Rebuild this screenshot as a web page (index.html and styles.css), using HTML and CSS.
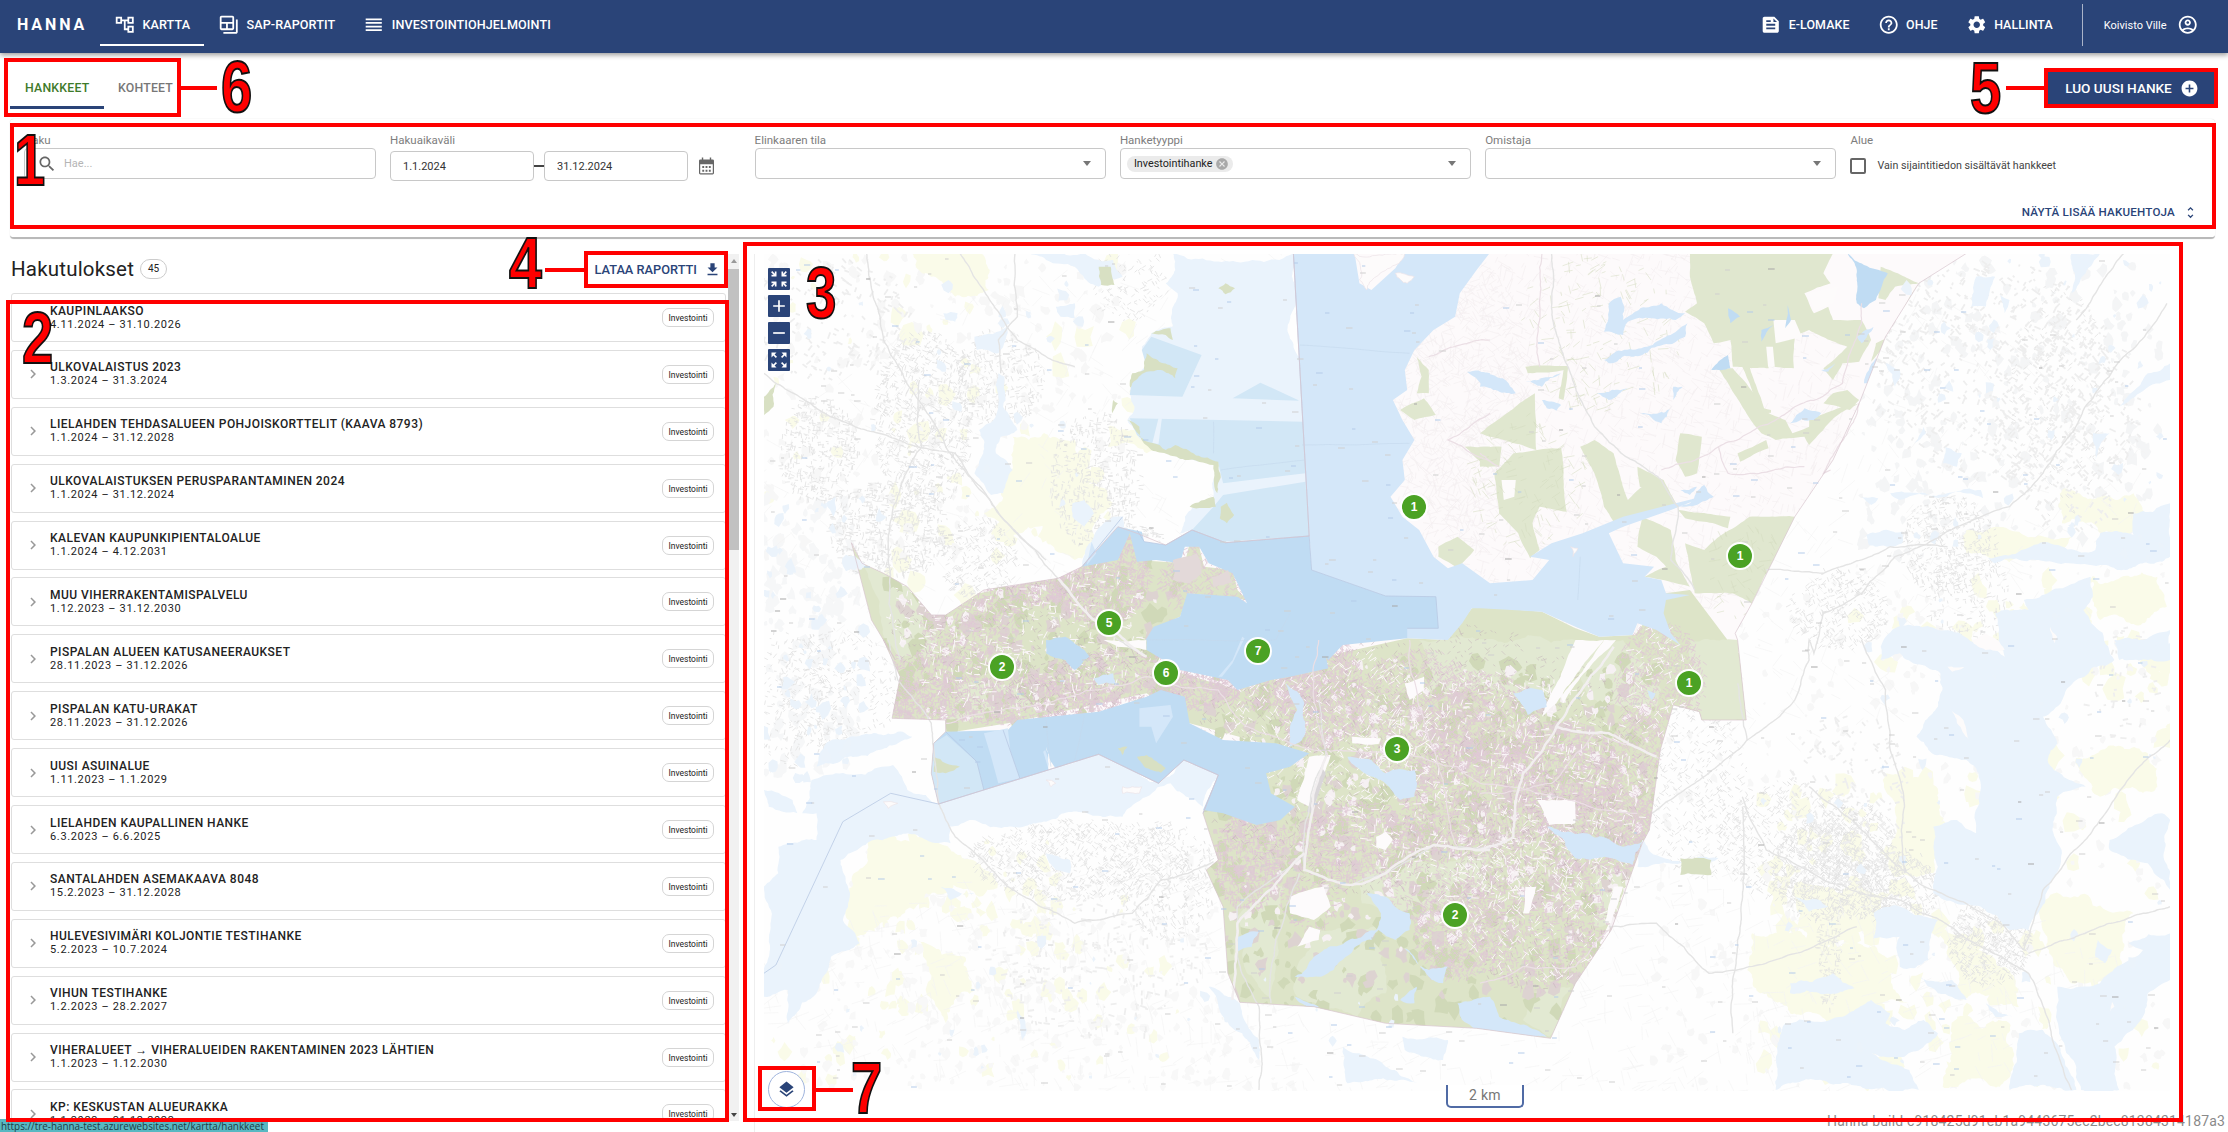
FILE: index.html
```
<!DOCTYPE html>
<html lang="fi">
<head>
<meta charset="utf-8">
<title>Hanna</title>
<link rel="stylesheet" href="styles.css">
</head>
<body>
<header class="topbar">
  <div class="brand">HANNA</div>
  <nav class="nav">
    <a class="nav-item active"><svg class="ico" viewBox="0 0 24 24"><path d="M22 11V3h-7v3H9V3H2v8h7V8h2v10h4v3h7v-8h-7v3h-2V8h2v3h7zM7 9H4V5h3v4zm10 6h3v4h-3v-4zm0-10h3v4h-3V5z"/></svg><span>KARTTA</span></a>
    <a class="nav-item"><svg class="ico" viewBox="0 0 24 24"><path d="M20 6v14H6v2h14c1.1 0 2-.9 2-2V6h-2zM16 2H4c-1.1 0-2 .9-2 2v12c0 1.1.9 2 2 2h12c1.1 0 2-.9 2-2V4c0-1.1-.9-2-2-2zM9 16H4v-5h5v5zm7 0h-5v-5h5v5zm0-7H4V4h12v5z"/></svg><span>SAP-RAPORTIT</span></a>
    <a class="nav-item"><svg class="ico" viewBox="0 0 24 24"><path d="M3 15h18v-2H3v2zm0 4h18v-2H3v2zm0-8h18V9H3v2zm0-6v2h18V5H3z"/></svg><span>INVESTOINTIOHJELMOINTI</span></a>
  </nav>
  <div class="nav-right">
    <a class="nav-item"><svg class="ico" viewBox="0 0 24 24"><path d="M16 3H5c-1.1 0-2 .9-2 2v14c0 1.1.9 2 2 2h14c1.1 0 2-.9 2-2V8l-5-5zM7 7h5v2H7V7zm10 10H7v-2h10v2zm0-4H7v-2h10v2zm-2-4V5l4 4h-4z"/></svg><span>E-LOMAKE</span></a>
    <a class="nav-item"><svg class="ico" viewBox="0 0 24 24"><path d="M11 18h2v-2h-2v2zm1-16C6.48 2 2 6.48 2 12s4.48 10 10 10 10-4.480 10-10S17.520 2 12 2zm0 18c-4.410 0-8-3.590-8-8s3.590-8 8-8 8 3.590 8 8-3.590 8-8 8zm0-14c-2.210 0-4 1.790-4 4h2c0-1.100.9-2 2-2s2 .9 2 2c0 2-3 1.750-3 5h2c0-2.250 3-2.500 3-5 0-2.210-1.790-4-4-4z"/></svg><span>OHJE</span></a>
    <a class="nav-item"><svg class="ico" viewBox="0 0 24 24"><path d="M19.140 12.940c.04-.3.060-.610.060-.940 0-.320-.020-.640-.070-.940l2.030-1.580c.180-.140.230-.410.120-.610l-1.920-3.320c-.120-.220-.370-.290-.590-.220l-2.390.960c-.500-.380-1.030-.700-1.620-.940l-.360-2.540c-.040-.240-.240-.410-.480-.410h-3.840c-.240 0-.430.170-.470.410l-.360 2.540c-.590.240-1.130.570-1.620.940l-2.390-.960c-.220-.080-.470 0-.590.220L2.740 8.870c-.120.210-.080.470.120.610l2.030 1.580c-.050.300-.090.630-.090.940s.020.640.070.940l-2.030 1.580c-.180.140-.230.410-.120.610l1.920 3.320c.120.220.370.290.590.220l2.390-.960c.500.380 1.030.700 1.620.940l.360 2.540c.050.240.240.410.480.410h3.840c.240 0 .440-.170.470-.410l.360-2.540c.590-.240 1.130-.560 1.620-.940l2.390.960c.220.080.470 0 .590-.220l1.920-3.320c.120-.220.070-.470-.120-.610l-2.010-1.580zM12 15.600c-1.980 0-3.600-1.620-3.600-3.600s1.620-3.600 3.600-3.600 3.600 1.620 3.600 3.600-1.620 3.600-3.600 3.600z"/></svg><span>HALLINTA</span></a>
    <div class="user"><span>Koivisto Ville</span><svg class="ico" viewBox="0 0 24 24"><path d="M12 2C6.480 2 2 6.480 2 12s4.480 10 10 10 10-4.480 10-10S17.520 2 12 2zM7.350 18.500C8.660 17.560 10.260 17 12 17s3.340.560 4.650 1.500c-1.310.940-2.910 1.500-4.650 1.500s-3.340-.560-4.650-1.500zm10.790-1.380C16.450 15.800 14.320 15 12 15s-4.450.800-6.140 2.120C4.700 15.730 4 13.950 4 12c0-4.420 3.580-8 8-8s8 3.580 8 8c0 1.950-.7 3.730-1.860 5.120zM12 6c-1.930 0-3.500 1.570-3.500 3.500S10.070 13 12 13s3.500-1.570 3.500-3.500S13.930 6 12 6zm0 5c-.83 0-1.500-.67-1.500-1.500S11.170 8 12 8s1.500.67 1.500 1.500S12.830 11 12 11z"/></svg></div>
  </div>
</header>

<div class="tabs">
  <div class="tab selected">HANKKEET</div>
  <div class="tab">KOHTEET</div>
  <button class="create">LUO UUSI HANKE<svg viewBox="0 0 24 24"><path d="M12 2C6.480 2 2 6.480 2 12s4.480 10 10 10 10-4.480 10-10S17.520 2 12 2zm5 11h-4v4h-2v-4H7v-2h4V7h2v4h4v2z"/></svg></button>
</div>

<section class="filters">
  <div class="fields">
    <div class="field"><label>Haku</label><div class="input search"><svg viewBox="0 0 24 24"><path d="M15.500 14h-.79l-.28-.27C15.410 12.590 16 11.110 16 9.500 16 5.910 13.090 3 9.500 3S3 5.910 3 9.500 5.910 16 9.500 16c1.610 0 3.090-.59 4.230-1.570l.27.28v.79l5 4.990L20.490 19l-4.990-5zm-6 0C7.010 14 5 11.990 5 9.500S7.010 5 9.500 5 14 7.010 14 9.500 11.990 14 9.500 14z"/></svg><span>Hae...</span></div></div>
    <div class="field"><label>Hakuaikaväli</label><div class="dates"><div class="input date">1.1.2024</div><i class="dash"></i><div class="input date">31.12.2024</div><svg class="cal" viewBox="0 0 16 18"><path d="M3 0h1.500v2h7V0H13v2h1.500q1.500 0 1.500 1.500v13q0 1.500-1.500 1.500h-13Q0 18 0 16.500v-13Q0 2 1.500 2H3zM1.300 7v9.700h13.400V7zM3.500 9h2v2h-2zm3.500 0h2v2H7zm3.500 0h2v2h-2zm-7 4h2v2h-2zM7 13h2v2H7zm3.500 0h2v2h-2z" fill-rule="evenodd"/></svg></div></div>
    <div class="field"><label>Elinkaaren tila</label><div class="input select"></div></div>
    <div class="field"><label>Hanketyyppi</label><div class="input select"><span class="chip">Investointihanke<svg viewBox="0 0 24 24"><path d="M12 2C6.470 2 2 6.470 2 12s4.470 10 10 10 10-4.470 10-10S17.530 2 12 2zm5 13.590L15.590 17 12 13.410 8.410 17 7 15.590 10.590 12 7 8.410 8.410 7 12 10.590 15.590 7 17 8.410 13.410 12 17 15.590z"/></svg></span></div></div>
    <div class="field"><label>Omistaja</label><div class="input select"></div></div>
    <div class="field"><label>Alue</label><div class="check"><i></i><span>Vain sijaintitiedon sisältävät hankkeet</span></div></div>
  </div>
  <div class="more">NÄYTÄ LISÄÄ HAKUEHTOJA<svg viewBox="0 0 24 24"><path d="M12 5.830L15.170 9l1.410-1.410L12 3 7.410 7.590 8.830 9 12 5.830zm0 12.340L8.830 15l-1.410 1.410L12 21l4.590-4.590L15.170 15 12 18.170z"/></svg></div>
</section>

<main class="main">
  <section class="results">
    <div class="results-inner">
      <div class="results-head"><h1>Hakutulokset</h1><span class="count">45</span><div class="download">LATAA RAPORTTI<svg viewBox="0 0 24 24"><path d="M19 9h-4V3H9v6H5l7 7 7-7zM5 18v2h14v-2H5z"/></svg></div></div>
      <div class="list" id="list"></div>
    </div>
    <div class="scrollbar"><i class="up"></i><i class="thumb"></i><i class="down"></i></div>
  </section>
  <section class="mapcard">
    <div class="map">
      <svg id="map" width="1406" height="837" viewBox="764 254 1406 837"></svg>
      <div class="controls">
        <button><svg viewBox="0 0 24 24"><path d="M9 9V3H7v2.590L3.910 2.500 2.500 3.910 5.590 7H3v2h6zm12 0V7h-2.590l3.090-3.090-1.410-1.410L17 5.590V3h-2v6h6zM3 15v2h2.590L2.500 20.090l1.410 1.410L7 18.410V21h2v-6H3zm12 0v6h2v-2.590l3.090 3.090 1.410-1.410L18.410 17H21v-2h-6z"/></svg></button>
        <button><svg viewBox="0 0 24 24"><path d="M19 13h-6v6h-2v-6H5v-2h6V5h2v6h6z"/></svg></button>
        <button><svg viewBox="0 0 24 24"><path d="M19 13H5v-2h14z"/></svg></button>
        <button><svg viewBox="0 0 24 24"><path d="M15 3l2.300 2.300-2.890 2.870 1.420 1.420L18.700 6.700 21 9V3zM3 9l2.300-2.300 2.870 2.890 1.420-1.420L6.700 5.300 9 3H3zm6 12l-2.300-2.300 2.890-2.870-1.420-1.420L5.300 17.300 3 15v6zm12-6l-2.300 2.300-2.870-2.890-1.420 1.420 2.890 2.870L15 21h6z"/></svg></button>
      </div>
      <div id="markers"></div>
      <div class="layers"><svg viewBox="0 0 24 24"><path d="M11.990 18.540l-7.370-5.730L3 14.070l9 7 9-7-1.630-1.270-7.380 5.740zM12 16l7.360-5.730L21 9l-9-7-9 7 1.630 1.270L12 16z"/></svg></div>
      <div class="scale">2 km</div>
    </div>
  </section>
</main>
<div class="build">Hanna build c918425d91eb1a9443675ec2bec81384314187a3</div>
<div class="status">https://tre-hanna-test.azurewebsites.net/kartta/hankkeet</div>

<div class="frame f1"></div><div class="frame f2"></div><div class="frame f3"></div><div class="frame f4"></div><div class="frame f5"></div><div class="frame f6"></div><div class="frame f7"></div>
<i class="lead l4"></i><i class="lead l5"></i><i class="lead l6"></i><i class="lead l7"></i>
<svg class="numbers" width="2228" height="1132">
  <g transform="translate(14 185) scale(.78 1)"><text>1</text></g>
  <g transform="translate(22 363) scale(.78 1)"><text>2</text></g>
  <g transform="translate(806 318) scale(.76 1)"><text>3</text></g>
  <g transform="translate(509 288) scale(.82 1)"><text>4</text></g>
  <g transform="translate(1970 113) scale(.78 1)"><text>5</text></g>
  <g transform="translate(221 112) scale(.78 1)"><text>6</text></g>
  <g transform="translate(851 1113) scale(.78 1)"><text>7</text></g>
</svg>
<script src="map.js"></script>
</body>
</html>
```
FILE: styles.css
```
*{box-sizing:border-box}
body{margin:0;width:2228px;height:1132px;overflow:hidden;position:relative;background:#fff;font-family:Roboto,"Liberation Sans",sans-serif;font-size:12px;color:#222;display:flex;flex-direction:column}
svg{fill:currentColor;flex:none}
button{border:0;padding:0;margin:0;font:inherit}
.topbar{height:53px;flex:none;background:#2a4478;color:#fff;display:flex;align-items:flex-start;box-shadow:0 2px 5px rgba(0,0,0,.4);z-index:1;padding-left:17px}
.brand{font-weight:700;font-size:16px;letter-spacing:2.9px;width:83px;line-height:50px}
.nav,.nav-right{display:flex;height:46px;align-items:stretch}
.nav-right{margin-left:auto}
.nav-item{display:flex;align-items:center;padding:4px 14px 0;font-size:12.600px;font-weight:500;letter-spacing:.1px;white-space:nowrap}
.nav-item.active{border-bottom:2px solid #fff;padding-top:6px;width:104px}
.nav-item span{margin-top:-1px}
.ico{width:21.500px;height:21.500px;margin-right:7px}
.nav-right .nav-item{font-size:12.400px}
.user{display:flex;align-items:center;border-left:1px solid #aab4c9;margin:4px 30px 0 15px;padding-left:21px;font-size:11px}
.user span{margin-right:10px}
.user .ico{margin:0}
.tabs{height:66px;flex:none;display:flex;padding:21px 12px 0 10px}
.tab{height:35px;line-height:28px;padding:0 14px;font-size:12.300px;font-weight:500;color:#777;letter-spacing:.2px}
.tab.selected{width:94px;padding-left:15px;color:#3e7a2a;border-bottom:3px solid #2a4478}
.create{margin:-3px 0 0 auto;width:170px;height:36px;background:#2a4478;color:#fff;font-size:13.600px;font-weight:500;display:flex;align-items:center;justify-content:center;gap:8px;padding:0 0 2px 2px;white-space:nowrap}
.create svg{width:19px;height:19px}
.filters{height:120px;flex:none;margin:0 13px 0 10px;border-bottom:2px solid #b9b9b9;border-radius:4px;padding:14px 14px 0;box-shadow:0 0 1px #ccc}
.fields{display:grid;grid-template-columns:352px 350.600px repeat(4,351.300px);gap:14px;height:64px}
.field label{display:block;height:15px;line-height:14px;color:#7d7d7d;font-size:11.500px}
.input{height:31px;border:1px solid #c8c8c8;border-radius:4px;display:flex;align-items:center}
.search{padding-left:12px;color:#666}
.search svg{width:20px;height:20px;margin-right:7px}
.search span{color:#b5b5b5;font-size:11px}
.dates{display:flex;align-items:center;padding-top:3px}
.date{width:144px;height:30px;padding-left:12px;color:#333;font-size:11px}
.dash{width:10px;height:1.500px;background:#444}
.cal{width:15px;height:18px;margin-left:11px;color:#666}
.select{padding:0 14px 0 6px}
.select:after{content:"";margin-left:auto;border:4px solid transparent;border-top:5px solid #777;border-bottom:0}
.chip{background:#ebebeb;border-radius:8px;height:16px;display:flex;align-items:center;padding:0 4px 0 7px;gap:3px;font-size:10.800px}
.chip svg{width:14px;height:14px;color:#a9a9a9}
.check{display:flex;align-items:center;gap:11px;height:35px;color:#444;font-size:10.700px}
.check i{width:16px;height:16px;border:2px solid #666;border-radius:2px}
.more{display:flex;justify-content:flex-end;align-items:center;height:28px;margin:1px 3px 0 0;color:#2a4478;font-weight:500;font-size:11.600px;letter-spacing:.2px;gap:8px}
.more svg{width:15px;height:15px}
.main{display:flex;flex:1;min-height:0}
.results{width:739px;display:flex;padding-top:15px;height:880px}
.results-inner{width:728px;overflow:hidden;padding-left:11px}
.results-head{display:flex;align-items:center;height:30px}
h1{font-size:20.500px;font-weight:400;margin:0 6px 0 0;letter-spacing:.2px}
.count{border:1px solid #ccc;border-radius:10px;height:20px;width:27px;text-align:center;line-height:18px;font-size:10px}
.download{margin-left:auto;padding-right:7px;color:#2a4478;font-weight:500;font-size:12.800px;display:flex;align-items:center;gap:7px}
.download svg{width:17px;height:17px}
.list{padding-top:9px;width:715px}
.row{height:49px;margin-bottom:7.900px;border:1px solid #dedede;border-radius:3px;display:flex;align-items:center;padding:0 11px 0 12px}
.row>svg{width:18px;height:18px;color:#999;margin-right:8px}
.row div{margin-top:-1px}
.row b{display:block;font-weight:500;font-size:12px;letter-spacing:.46px;line-height:15px;white-space:nowrap}
.row span{display:block;font-size:11px;letter-spacing:.65px;line-height:12px}
.row em{font-style:normal;margin-left:auto;border:1px solid #d5d5d5;border-radius:7px;width:52px;height:19px;text-align:center;line-height:18px;font-size:8.500px}
.scrollbar{width:11px;background:#f1f1f1;display:flex;flex-direction:column;align-items:center;height:867px}
.thumb{width:11px;height:281px;background:#c1c1c1;margin-top:6px}
.up,.down{border:3px solid transparent}
.up{border-top:0;border-bottom:4px solid #999;margin-top:5px}
.down{border-bottom:0;border-top:4px solid #444;margin-top:auto;margin-bottom:4px}
.mapcard{margin:15px 0 0 15px;border-left:1px solid #eee;padding-left:9px;width:1430px}
.map{position:relative;width:1406px;height:837px}
#map{display:block}
.controls{position:absolute;left:4px;top:14px;display:grid;gap:5px}
.controls button{width:22px;height:22px;background:#2a4478;color:#fff;border-radius:1px;display:grid;place-items:center}
.controls svg{width:20px;height:20px}
.marker{position:absolute;width:28px;height:28px;border-radius:50%;background:#4ba224;border:2px solid #fff;color:#fff;font:bold 12px/24px "Liberation Sans",sans-serif;text-align:center}
.layers{position:absolute;left:4px;top:817px;width:37px;height:37px;border-radius:50%;border:1px solid #9fb4dd;background:#fff;color:#2a4478;display:grid;place-items:center}
.layers svg{width:19px;height:19px}
.scale{position:absolute;left:682px;top:831px;width:78px;height:23px;border:2px solid #506ba5;border-top:0;border-radius:0 0 5px 5px;background:#fff;color:#777;font-size:14px;line-height:20px;text-align:center;letter-spacing:.3px}
.build{position:absolute;left:1827px;top:1112px;font-size:14px;line-height:18px;color:#8a8a8a;letter-spacing:.17px;white-space:nowrap}
.status{position:absolute;left:0;top:1119px;width:268px;height:13px;background:#58b8c2;color:#1d3c46;font:9.900px/15px "Open Sans",sans-serif;padding-left:1px;white-space:nowrap}
.frame{position:absolute;border:4px solid #f00}
.f1{left:10px;top:123px;width:2206px;height:106px}
.f2{left:6px;top:300px;width:723px;height:822px}
.f3{left:743px;top:242px;width:1440px;height:880px}
.f4{left:584px;top:251px;width:144px;height:37px}
.f5{left:2044px;top:68px;width:174px;height:40px}
.f6{left:4px;top:58px;width:177px;height:59px}
.f7{left:758px;top:1066px;width:58px;height:45px}
.lead{position:absolute;height:4px;background:#f00}
.l4{left:545px;top:268px;width:40px}
.l5{left:2006px;top:86px;width:39px}
.l6{left:180px;top:86px;width:37px}
.l7{left:815px;top:1088px;width:38px}
.numbers{position:absolute;left:0;top:0}
.numbers text{font:bold 72px "Liberation Sans",sans-serif;fill:#f00;stroke:#111;stroke-width:2px}
```
FILE: map.js
```
const ROWS = [
  ['KAUPINLAAKSO','4.11.2024 – 31.10.2026'],['ULKOVALAISTUS 2023','1.3.2024 – 31.3.2024'],
  ['LIELAHDEN TEHDASALUEEN POHJOISKORTTELIT (KAAVA 8793)','1.1.2024 – 31.12.2028'],
  ['ULKOVALAISTUKSEN PERUSPARANTAMINEN 2024','1.1.2024 – 31.12.2024'],['KALEVAN KAUPUNKIPIENTALOALUE','1.1.2024 – 4.12.2031'],
  ['MUU VIHERRAKENTAMISPALVELU','1.12.2023 – 31.12.2030'],['PISPALAN ALUEEN KATUSANEERAUKSET','28.11.2023 – 31.12.2026'],
  ['PISPALAN KATU-URAKAT','28.11.2023 – 31.12.2026'],['UUSI ASUINALUE','1.11.2023 – 1.1.2029'],
  ['LIELAHDEN KAUPALLINEN HANKE','6.3.2023 – 6.6.2025'],['SANTALAHDEN ASEMAKAAVA 8048','15.2.2023 – 31.12.2028'],
  ['HULEVESIVIMÄRI KOLJONTIE TESTIHANKE','5.2.2023 – 10.7.2024'],['VIHUN TESTIHANKE','1.2.2023 – 28.2.2027'],
  ['VIHERALUEET → VIHERALUEIDEN RAKENTAMINEN 2023 LÄHTIEN','1.1.2023 – 1.12.2030'],['KP: KESKUSTAN ALUEURAKKA','1.1.2023 – 31.12.2023']
];
document.getElementById('list').innerHTML = ROWS.map(r =>
  `<div class="row"><svg viewBox="0 0 24 24"><path d="M10 6L8.590 7.410 13.170 12l-4.580 4.590L10 18l6-6z"/></svg><div><b>${r[0]}</b><span>${r[1]}</span></div><em>Investointi</em></div>`).join('');

const MARKERS = [[1414,507,1],[1109,623,5],[1258,651,7],[1002,667,2],[1166,673,6],[1740,556,1],[1689,683,1],[1397,749,3],[1455,915,2]];
document.getElementById('markers').innerHTML = MARKERS.map(m =>
  `<div class="marker" style="left:${m[0]-778}px;top:${m[1]-268}px">${m[2]}</div>`).join('');

// Seeded generator keeps the terrain identical on every load.
let seed = 7;
const rnd = () => (seed = (seed * 16807) % 2147483647) / 2147483647;
const QUADS = {A:[740,240,.4783,1/3],B:[1480,240,.477,1/3],C:[740,640,.4783,1/3],D:[1480,640,.477,1/3]};
// "A 10,20 30,40 B 5,6": points in the quadrant that the letter names.
function parse(s){
  let q = QUADS.A; const out = [];
  for (const t of s.trim().split(/\s+/)) {
    if (QUADS[t]) { q = QUADS[t]; continue; }
    const [x,y] = t.split(',').map(Number);
    out.push([q[0]+x*q[2], q[1]+y*q[3]]);
  }
  return out;
}
function rough(a,b,k,out){
  const dx=b[0]-a[0], dy=b[1]-a[1], l=Math.hypot(dx,dy);
  if (l<4) { out.push(b); return; }
  const r=(rnd()-.5)*k, m=[(a[0]+b[0])/2-dy*r,(a[1]+b[1])/2+dx*r];
  rough(a,m,k,out); rough(m,b,k,out);
}
function path(s,k,open){
  const p=parse(s), out=[p[0]];
  for (let i=1;i<p.length+(open?0:1);i++) k?rough(p[i-1],p[i%p.length],k,out):out.push(p[i%p.length]);
  return 'M'+out.map(v=>v[0].toFixed(1)+' '+v[1].toFixed(1)).join('L')+(open?'':'Z');
}
let svg='';
const area=(fill,list,k=0,stroke='')=>list.forEach(s=>svg+=`<path d="${path(s,k)}" fill="${fill}" ${stroke&&`stroke="${stroke}" stroke-width=".7"`}/>`);
const line=(color,w,list,k=.12)=>list.forEach(s=>svg+=`<path d="${path(s,k,true)}" fill="none" stroke="${color}" stroke-width="${w}"/>`);
// Scatter short strokes inside ellipses given in page pixels.
function scatter(color,w,len,spots){
  let d='';
  for (const [cx,cy,rx,ry,n] of spots) {
    const base=rnd()*3;
    for (let i=0;i<n;i++){
      const t=rnd()*6.283,r=Math.sqrt(rnd()),x=cx+Math.cos(t)*rx*r,y=cy+Math.sin(t)*ry*r;
      const a=base+(rnd()<.5?1.57:0)+(rnd()-.5)*.7,l=len*(.4+rnd());
      d+=`M${x.toFixed(1)} ${y.toFixed(1)}l${(Math.cos(a)*l).toFixed(1)} ${(Math.sin(a)*l).toFixed(1)}`;
    }
  }
  svg+=`<path d="${d}" fill="none" stroke="${color}" stroke-width="${w}"/>`;
}
const blobs=(color,n,x0,y0,x1,y1,s)=>{const l=[];for(let i=0;i<n;i++){
  const cx=x0+rnd()*(x1-x0),cy=y0+rnd()*(y1-y0),k=s*(.3+rnd());let d='';
  for(let j=0;j<8;j++){const a=j*.785,r=k*(.45+rnd()*.8);d+=(j?'L':'M')+(cx+Math.cos(a)*r).toFixed(1)+' '+(cy+Math.sin(a)*r*1.2).toFixed(1);}
  l.push(d+'Z');}
  svg+=`<path d="${l.join('')}" fill="${color}"/>`;};

const PALE='#eaf3fc', MID='#d4e7f9', DEEP='#c0dcf3', TEAL='#d2e7f6', GREEN='#e0e7cf', YEL='#fafbe9';
const CITY='A 233,908 255,970 300,1000 350,1040 400,1125 430,1125 510,1050 665,1015 715,980 790,860 830,880 890,915 945,870 1015,908 1190,888 1157,40 B 1020,40 920,130 850,290 795,490 740,660 660,830 570,1090 535,1180 D 540,0 558,240 465,240 460,215 405,195 378,330 355,570 340,610 275,870 200,1030 148,1195 C 1540,1165 1350,1150 1200,1100 1045,1087 1020,1000 1010,800 975,690 1000,660 968,520 1000,405 928,360 875,430 750,343 415,492 400,400 405,310 430,275 430,240 318,235 335,110 300,0 A 325,1260 275,1140';

svg+=`<defs><clipPath id="city"><path d="${path(CITY,0)}"/></clipPath></defs><rect x="764" y="254" width="1406" height="837" fill="#fefefe"/>`;
// Fields and bogs beyond the city limits
blobs(YEL,45,890,254,1130,600,9); blobs(YEL,30,764,254,1000,520,6);
blobs(YEL,70,850,840,1080,1010,7); blobs(YEL,70,770,900,1180,1080,6);
blobs(YEL,120,1760,780,2000,1085,9); blobs(YEL,80,1960,580,2170,1085,9); blobs(YEL,35,1850,600,2170,680,10);
blobs('#f6f7f8',140,764,500,860,780,6); blobs('#f4f5f6',300,1860,260,2160,560,5); blobs('#f7f7f7',260,764,254,1130,560,5); blobs('#f8f8f8',500,800,850,1300,1090,4);blobs('#f7f7f7',400,1650,560,2170,1090,4);
area(YEL,['A 570,590 700,600 740,700 690,760 620,860 560,900 510,820 560,700','A 640,790 740,730 780,790 740,900 700,960 640,900','A 360,40 500,40 520,150 450,170 400,110','A 770,560 900,620 850,640 770,620',
 'C 270,590 400,570 450,640 530,700 500,770 390,760 310,840 240,900 220,820','C 370,900 470,950 480,1050 430,1150 390,1060',
 'B 1220,750 1370,760 1400,850 1300,880 1220,850','B 1020,870 1240,890 1200,950 1020,940','B 1290,1020 1420,1010 1440,1100 1300,1140','D 850,400 960,480 950,700 870,710','D 660,730 860,760 840,880 690,900','D 570,880 830,920 900,1090 650,1120 560,990','D 1160,800 1370,820 1340,1000 1240,1030','D 1250,360 1400,340 1420,440 1300,470','D 960,870 1060,940 1130,1100 1010,1080','D 1000,1130 1110,1150 1090,1340 970,1340'],.4);
scatter('#e2e2e2',.8,4,[[925,420,50,90,1000],[820,450,40,55,450],[1000,380,45,50,400],[890,530,60,50,700],[980,560,40,40,300],[1095,480,45,70,600],[1130,280,40,40,150],[780,700,60,70,350],[840,690,60,60,350],[1080,860,110,40,1000],[1140,560,30,35,250],[1790,840,70,60,650],[1700,790,50,90,500],[1820,870,50,50,700],[1860,860,40,60,600],[1900,890,40,40,500],[1990,940,40,45,700],[1830,950,12,60,150],[1950,545,50,50,450],[1840,610,50,40,400],[2060,400,50,120,200],[1970,600,40,60,250],[1170,880,50,60,400]]);
scatter('#eeeeee',1.8,5,[[1990,370,120,110,650],[2070,420,70,110,350],[1850,800,60,90,200],[1100,960,110,80,250],[830,320,90,60,200],[2120,680,40,60,60]]);
scatter('#f3f3f3',.6,16,[[1450,500,700,280,1400],[1450,980,700,140,1300]]);

svg+='<g clip-path="url(#city)">';
area('#fdfafb',[CITY]);
// Northern countryside
scatter('#f3eef0',.6,11,[[1580,430,280,200,2600],[1460,400,70,150,700]]);
area(GREEN,['B 440,40 740,40 720,100 735,130 680,160 700,220 730,200 740,240 800,240 820,300 795,365 760,370 740,420 720,385 770,320 690,270 660,290 658,385 615,380 605,320 605,385 530,380 525,300 490,310 470,250 430,215 455,190 440,110',
 'B 500,385 530,385 600,515 640,540 655,580 690,560 690,540 760,500 795,490 745,530 690,615 680,590 620,600 590,580','B 550,380 565,380 595,505 610,510 610,518 585,518','B 770,450 795,480 775,510 720,490 740,460','B 840,80 920,130 870,140 850,180 835,175',
 'B 920,130 860,300 820,365 830,310 860,290','B 0,580 115,460 118,630 50,600','B 0,620 45,620 40,680 0,680','B 30,700 70,640 170,625 182,815 125,800 110,850 125,930 105,955 80,880 40,820','B 210,620 240,600 280,640 310,780 340,740 385,720 415,800 280,845 260,800 240,700','B 420,580 465,590 455,700 430,710 410,660','B 540,640 600,600 605,625 545,665','B 95,380 185,378 175,480 165,475 175,390 100,400','B 330,680 385,720 375,760 335,740',
 'B 415,810 525,830 520,865 430,835','B 565,830 660,830 570,1090 530,1060 450,1060 440,990 430,910 470,930','B 340,830 400,870 410,960 440,1040 345,1010 390,980 370,950 330,920',
 'A 1415,350 1440,390 1440,460 1415,460 1425,410','A 1380,510 1430,475 1455,525 1410,540','A 1460,920 1500,890 1535,930 1500,985 1460,950','A 1515,620 1568,620 1565,685'],.06);
area('#fdfbfb',['B 45,720 75,720 72,770 50,780','B 600,320 614,320 618,380 604,380','B 690,160 750,140 740,190 700,210','B 615,240 660,240 675,290 620,310']);
scatter('#d3dbbf',.5,9,[[1600,330,80,80,160],[1530,480,60,70,120],[1750,580,40,60,70]]);
// Built-up south and west
area('#dde4c8',['A 1190,1260 1395,1195 1480,1200 1530,1105 B 0,1100 130,1115 200,1165 250,1190 325,1185 390,1060 440,1050 540,1240 D 600,0 600,260 340,640 148,1220 C 1540,1180 1040,1100 950,700 960,400 1170,340 940,250 850,160 560,250 430,280 400,500 280,240 280,0 A 220,880 260,980 300,1000 400,1120 500,1060 700,1000 790,850 830,880 830,960 930,970 940,910 960,920 970,980 1030,990 1040,1050 1060,1080 940,1060 920,1130 850,1175 850,1260 C 900,90 1040,150 1225,60']);
const green2=['A 240,920 320,1010 350,1040 400,1140 410,1260 330,1260','C 460,130 600,150 700,120 600,200 430,240','C 1420,0 1568,0 1568,160 1440,150','D 0,0 200,0 160,200 90,200 0,150','D 440,0 540,0 558,240 465,240 440,190','C 1200,880 1330,860 1350,1060 1290,1130 1160,1060','C 1300,700 1420,660 1568,640 1568,760 1380,820 1300,790','D 200,30 300,0 380,150 370,200 250,190','D 120,1050 190,1040 145,1190 90,1140','D 230,670 310,690 280,850 240,860','C 1040,830 1110,740 1140,740 1110,1080 1060,1000'];
area('#e2e9d2',green2,.25);
blobs('#d0d9b8',160,880,560,1180,730,7); blobs('#d0d9b8',380,1200,660,1660,1020,7);
blobs('#ddd3d1',90,900,590,1180,720,6); blobs('#ddd3d1',240,1210,690,1650,1000,6);
blobs('#f6f1f3',60,900,580,1180,720,4); blobs('#f6f1f3',240,1220,660,1660,950,4.500);
scatter('#dfc9d6',.8,4,[[970,620,50,50,900],[1040,575,40,30,900],[1100,575,50,50,1500],[1220,580,60,38,900],[920,690,40,40,500],[1000,700,120,25,1400],[1120,680,80,30,800],[1200,680,45,30,900],[1270,680,60,30,900],[1320,690,45,60,1700],[1420,720,70,70,1700],[1480,720,60,50,1200],[1360,840,60,40,900],[1480,800,80,60,1800],[1560,770,60,50,1600],[1600,830,60,45,1600],[1250,860,35,50,900],[1440,870,60,60,600],[1640,790,35,80,1100],[1660,680,45,60,900],[1460,930,45,50,900],[1540,920,70,70,1300],[1310,870,40,60,500]]);
scatter('#c3b1b9',.5,4,[[1000,620,110,90,450],[1420,760,230,140,1700],[1540,880,110,110,500],[1100,680,100,40,300]]);
scatter('#fbf6f9',1,6,[[1020,620,130,90,450],[1330,730,110,90,500],[1500,790,150,120,800],[1540,900,100,80,350],[1660,680,30,60,100]]);
area('#fdfbfc',['C 1190,350 1235,345 1200,510 1165,480','C 1150,770 1220,740 1235,800 1200,840 1150,820','C 1390,130 1430,110 1430,150 1400,180','C 1330,590 1350,575 1365,600 1350,630 1330,620','C 1280,290 1340,295 1335,312 1280,310','C 1190,860 1213,870 1210,900 1165,920','D 200,0 260,0 160,190 130,230','D 120,480 200,480 200,550 145,555','D 260,0 285,0 175,190 170,170','C 760,0 850,0 850,30 790,20','D 280,740 300,740 275,850 262,850','D 95,740 118,740 103,820 90,820'],.08);
area('#d9d6d9',['C 1215,380 1225,400 1195,520 1185,515']);
svg+='</g>';

// Lakes outside the limits
area(PALE,['A 905,40 1157,40 1190,888 1010,905 945,870 920,880 930,830 990,770 1000,670 930,655 870,630 830,585 810,540 825,500 815,460 820,420 850,380 840,320 860,280 905,260 915,160 890,130 910,90',
 'A 600,40 720,40 780,60 800,110 750,140 700,80 640,60','A 490,290 560,255 555,300 540,340 495,330','A 540,400 553,410 550,500 580,570 545,590 535,640 570,690 550,760 525,765 490,700 510,600 500,570 530,540','A 695,790 720,780 740,820 720,860 695,830','A 660,200 700,190 700,235 670,230','A 425,220 455,220 450,245 430,240','A 180,790 200,770 195,830','A 715,975 780,830 800,830 800,870 740,960',
 'C 50,740 80,700 80,620 160,600 160,520 130,520 150,420 200,400 320,375 350,450 420,500 440,560 440,610 390,600 350,580 280,600 210,660 230,760 215,840 250,910 190,950 160,1060 110,1130 100,1150 100,1050 50,1070','C 415,492 750,343 875,430 928,360 1000,405 968,500 900,430 850,470 800,530 640,545 570,560 480,540 430,560 420,520','C 180,310 340,275 360,290 330,310 200,370 160,380','C 50,450 110,480 120,520 60,500','C 640,640 690,660 690,700 660,690','C 980,1040 1045,1090 1085,1200 1085,1260 1050,1180','C 1385,1190 1480,1200 1470,1260 1390,1230','C 1260,1220 1350,1280 1420,1330 1270,1330','C 420,740 490,760 440,780','C 580,1110 600,1170 590,1200',
 'B 860,760 1050,750 1055,775 880,780','B 1370,820 1447,790 1447,950 1430,965 1300,975 1170,960 1080,970 1065,955 1290,930 1300,880 1370,885','B 1200,1050 1280,1010 1285,1070 1265,1110 1330,1260 D 1250,120 1180,230 1210,310 1190,360 1270,440 1210,470 1200,570 1220,640 1150,870 1110,870 1050,800 950,760 960,680 950,560 1000,540 1040,580 1045,400 1020,360 940,330 915,290 960,200 965,100 880,40 840,60 B 840,1220 870,1165 960,1170 1070,1220 1100,1250 1080,1120 1150,1110 1140,1080 1190,1060','D 1330,0 1447,-30 1447,50 1350,60','B 1330,1210 1447,1210 1447,1260 1340,1260','B 1040,110 1080,110 1060,200 1030,200','B 1240,40 1300,40 1240,160','B 810,885 885,875 885,910 815,915','B 975,620 1010,640 1000,680 970,670','B 1285,580 1320,580 1290,660','B 1447,370 1447,420 1340,500 1400,400','B 850,370 880,390 870,440','B 1090,165 1110,180 1100,220','B 800,770 835,775 820,795','B 930,560 935,580 910,610',
 'D 825,820 870,795 960,840 940,960 910,985 880,980 880,890 825,895','D 620,1350 640,1150 760,1130 820,1080 860,1120 850,1150 890,1170 930,1140 960,1180 890,1250 820,1240 900,1290 920,1350','D 1210,1040 1300,1030 1390,930 1360,910 1447,880 1447,1020 1400,1060 1380,1150 1330,1220 1340,1350 1260,1350 1220,1200','D 1110,1350 1130,1180 1180,1170 1250,1350','D 650,1030 740,1000 785,1045 650,1060','D 340,600 360,640 500,655 420,670 330,680','D 1320,600 1430,520 1447,540 1447,750 1400,670 1320,630','D 920,1010 990,1020 1020,1080 960,1060','D 1295,900 1325,930 1310,970 1290,950','D 1060,1090 1120,1130 1080,1130','D 660,770 730,800 690,815'],.22);
blobs('#ebf3fb',55,764,500,870,780,6);blobs('#ebf3fb',50,1900,254,2170,560,5);blobs('#ebf3fb',30,764,930,1400,1080,4);blobs('#ebf3fb',25,780,254,1080,520,5);blobs('#ebf3fb',40,1760,600,2160,1080,4);

// Näsijärvi and Pyhäjärvi
area(TEAL,['A 860,290 965,345 925,470 815,465 820,420 850,380 840,330','A 1030,475 1088,428 1170,482','A 815,535 1177,545 1182,700 1010,730 1000,670 930,655 870,630 830,585','A 1010,765 1182,725 1190,888 1010,905 945,870 990,800']);
area(PALE,['A 875,535 882,535 875,612 862,610']);
area(MID,['A 1157,40 1285,40 1295,130 1320,150 1370,85 1390,40 B 20,40 A 1540,90 1505,160 1495,230 1450,270 1410,330 1390,390 1395,450 1365,480 1385,540 1410,600 1385,660 1390,720 1360,770 1385,830 1420,870 1450,950 1480,985 1510,970 1568,1030 B 110,1020 145,960 105,950 150,910 215,880 300,830 410,790 480,765 400,810 300,860 270,880 290,940 300,970 365,980 345,1010 380,1020 390,1060 440,1065 390,1080 385,1120 400,1180 420,1215 370,1170 330,1150 320,1185 250,1190 200,1160 130,1115 0,1105 A 1530,1105 1510,1150 1480,1200 1395,1195 1350,1068 1195,990']);
area(DEEP,['A 715,980 790,860 840,875 845,905 890,915 945,870 1015,908 1190,888 1195,990 1350,1068 1455,1070 1460,1165 1395,1165 1395,1195 1260,1215 1230,1260 C 1225,50 1230,85 1150,110 1110,120 1040,150 1020,120 920,90 850,30 850,0 A 848,1200 865,1160 920,1130 935,1060 1040,1070 1060,1090 1030,1000 980,970 960,920 930,920 920,970 870,960 830,965 815,880 790,960']);
area(DEEP,['C 405,310 430,275 560,270 580,240 750,215 850,170 880,150 930,170 940,250 1010,300 1120,310 1190,340 1150,380 1100,400 1110,460 1160,500 1130,540 1080,555 1010,520 968,510 1000,405 928,360 875,430 750,343 415,492 400,400']);
area(MID,['C 510,280 560,265 565,330 585,415 540,430 525,350','C 835,205 900,195 905,230 870,310 860,260 835,260','C 638,330 650,380 645,388 634,335']);
area(TEAL,['C 405,310 432,285 495,365 510,450 415,492 400,400']);
area(MID,['C 1000,110 1030,60 1050,-10 1055,-5 1030,70 1008,110','A 745,940 725,975 735,905']);
svg+='<g clip-path="url(#city)">';
area(DEEP,['A 650,1200 680,1190 720,1230 735,1260 C 730,50 700,90 680,60 640,40 640,0','B 770,40 805,75 855,100 830,180 805,205 790,190 790,90','B 520,205 545,230 525,250','B 645,195 652,240 640,265','B 590,270 615,255 590,305','B 490,380 520,345 525,385 485,390'],.15);
area(MID,['C 740,115 780,100 785,130 750,135','C 1140,130 1180,190 1175,300 1150,320 1165,210','C 1270,350 1320,360 1350,400 1410,390 1410,470 1380,480 1340,420','C 1310,760 1350,770 1400,820 1400,870 1370,900 1335,870 1320,900 1210,1010 1160,1010 1200,950 1330,870 1340,820','C 1390,925 1440,990 1480,980 1470,1030 1440,1010','C 1040,890 1085,875 1070,920 1040,935','C 1500,1090 1568,1070 D 40,1130 140,1190 0,1185 C 1510,1140','D 140,560 220,580 300,620 340,605 320,675 200,655','D 70,160 130,150 140,200 100,225','C 1380,1080 1415,1040 1410,1090','C 1160,1070 1210,1100 1200,1130','B 245,460 310,445 270,480','B 335,520 400,505 380,550','B 260,360 350,320 435,250 430,290 340,345 270,370','B 270,190 295,170 300,240 380,190 430,220 410,240 310,245 300,285 260,275','B 0,395 60,430 75,460 0,440','B 650,550 680,505 715,520 700,540','B 790,290 825,260 800,310','B 805,430 830,355 835,370 815,430','B 130,480 170,495 160,512 140,505','B 95,425 170,400 130,440','B 405,440 425,440 405,480','B 715,390 745,370 730,395','B 420,750 455,740 440,765','B 415,800 490,770 470,735 440,790','D 350,150 368,160 360,180','A 1520,395 1568,400 1568,445'],.22);
svg+='</g>';
// Shorelines and islands
area('#fdfbfb',['A 1283,40 1390,40 1370,75 1330,110 1310,150 1295,120','A 1370,100 1410,110 1395,130','C 640,420 660,430 650,440','B 190,920 205,925 195,950','C 800,440 840,440 835,460 800,460','C 300,485 330,490 310,505'],.3,'#ece4e8');
area('#d8e0c3',['A 1000,145 1015,130 1035,145 1015,163','C 830,350 850,345 890,385 880,398 845,380','C 790,325 810,320 800,345','A 1005,800 1018,788 1033,825 1018,850 1003,835','A 860,280 900,265 905,300 890,285','A 850,340 915,385 910,415 880,390 850,395 820,430 815,460 820,400 845,390','A 810,540 835,560 835,590 890,630 910,615 1000,665 998,760 990,675 930,660 860,630','A 750,80 775,80 783,135 755,135','C 405,350 430,370 460,380 430,400 405,395','A 940,800 990,770 995,800','A 50,470 75,430 70,500 50,525','D 420,655 485,660 485,705 420,705','A 780,480 790,490 778,520'],.2);
area('#e3d9d9',['A 930,950 955,940 965,1000 940,1030 905,1020 905,960','A 985,1010 1020,990 1030,1030 990,1040'],.2);
area('#fdfbfb',['C 640,320 660,385 645,390','D 985,205 1010,235 1025,300 1000,250','D 1030,0 1060,-20 1100,30 1060,30','D 980,80 1015,82 990,95','D 1195,-40 1210,-10 1205,10','D 1325,1085 1330,1100 1320,1115'],.2);

// Roads and district lines
line('#e4e4e4',1.4,['A 265,40 300,300 430,620 560,850 665,1015 740,1140 850,1250','A 50,400 240,560 450,640 510,760 640,960','A 375,420 380,620 320,800 310,920 335,1260','A 460,40 580,300 700,380','A 575,40 580,230 540,300 545,400','C 310,0 330,120 400,250 415,490 450,590 560,740 700,850 820,820 880,720 990,665','C 1568,625 1450,615 1350,700 1280,735 1180,690 1180,570 1225,350 1210,180','C 1110,1090 1120,900 1170,700','C 1085,1350 1085,1100 1040,950 1040,800 1180,640','D 540,130 560,300 600,260 660,180 690,60 690,0 B 700,1240 720,1120 800,1060 870,950 1000,860 1110,800 1180,700 1300,440 1440,190','D 360,520 450,430 560,300','D 550,470 600,630 720,720 880,780 1050,920 1150,1000 1200,1200 1240,1350','D 690,440 800,570 920,730 1100,860 1140,930','D 1447,300 1370,400 1300,540 1180,750 1140,930','D 1447,800 1300,860 1150,940','D 270,860 370,850 480,1000 700,920 790,860','B 150,40 150,200 240,560 380,720 415,800 400,960 450,1050','B 1350,40 1250,240','B 600,990 720,1000 860,920 980,920','D 800,0 850,150 860,330 890,500 890,700','D 550,500 540,900 530,1180'],.1);
line('#ebdfe5',1.2,['A 1568,300 1440,350','A 1568,520 1480,600 B 40,680 0,640','B 380,690 500,620 660,500 760,430 800,250 800,190','B 500,620 520,700 680,680','B 735,690 720,700 795,490','B 125,380 130,40','C 430,250 600,200 850,110 1000,150 1050,250 1200,330 1350,340 1500,380 D 0,430 330,520','D 0,460 150,430 240,280 380,360','C 1210,0 1200,180 1230,350','C 1400,0 1420,200 1470,420 1500,620','D 0,1030 90,980 200,980 270,870']);
line('#f2eff0',2.500,['C 1568,630 1450,615 1350,700 1280,735 1180,690 1225,350','D 0,630 70,590 90,400 160,260 280,20','A 665,1015 740,1140 850,1250','C 1030,1080 1040,850 1180,640','D 160,260 270,280 370,350']);
line('#b9c9e3',.8,['A 1157,40 1190,888 1195,990 1350,1068 1455,1070 1460,1165 1395,1165','A 830,870 845,905 890,915 945,870 1015,908 1190,888','A 715,980 800,830','C 50,1000 75,975 215,545 315,460 415,492 750,343 875,430 928,360 1000,405 968,520','C 430,275 495,365 510,450','C 550,270 585,415'],0);
line('#c5d8ec',.6,['A 1170,315 1400,340','A 1175,615 1400,610','A 990,545 990,640','A 1005,690 1180,660','B 205,1080 210,950','A 1150,1120 1120,1200 850,1200','C 640,240 650,380','C 720,225 700,360'],.02);
svg+=`<path d="${path(CITY,0)}" fill="none" stroke="#d8c6cf" stroke-width=".7"/>`;

// Place-name ticks
const ticks=(c,n)=>{let d='';for(let i=0;i<n;i++)d+=`M${(770+rnd()*1395).toFixed(0)} ${(258+rnd()*830).toFixed(0)}h${(3+rnd()*4).toFixed(1)}`;svg+=`<path d="${d}" stroke="${c}" stroke-width="1.200"/>`;};
ticks('#cfcfcf',430); ticks('#b4cbea',230); ticks('#a8a8a8',50);
document.getElementById('map').innerHTML=svg;
```
